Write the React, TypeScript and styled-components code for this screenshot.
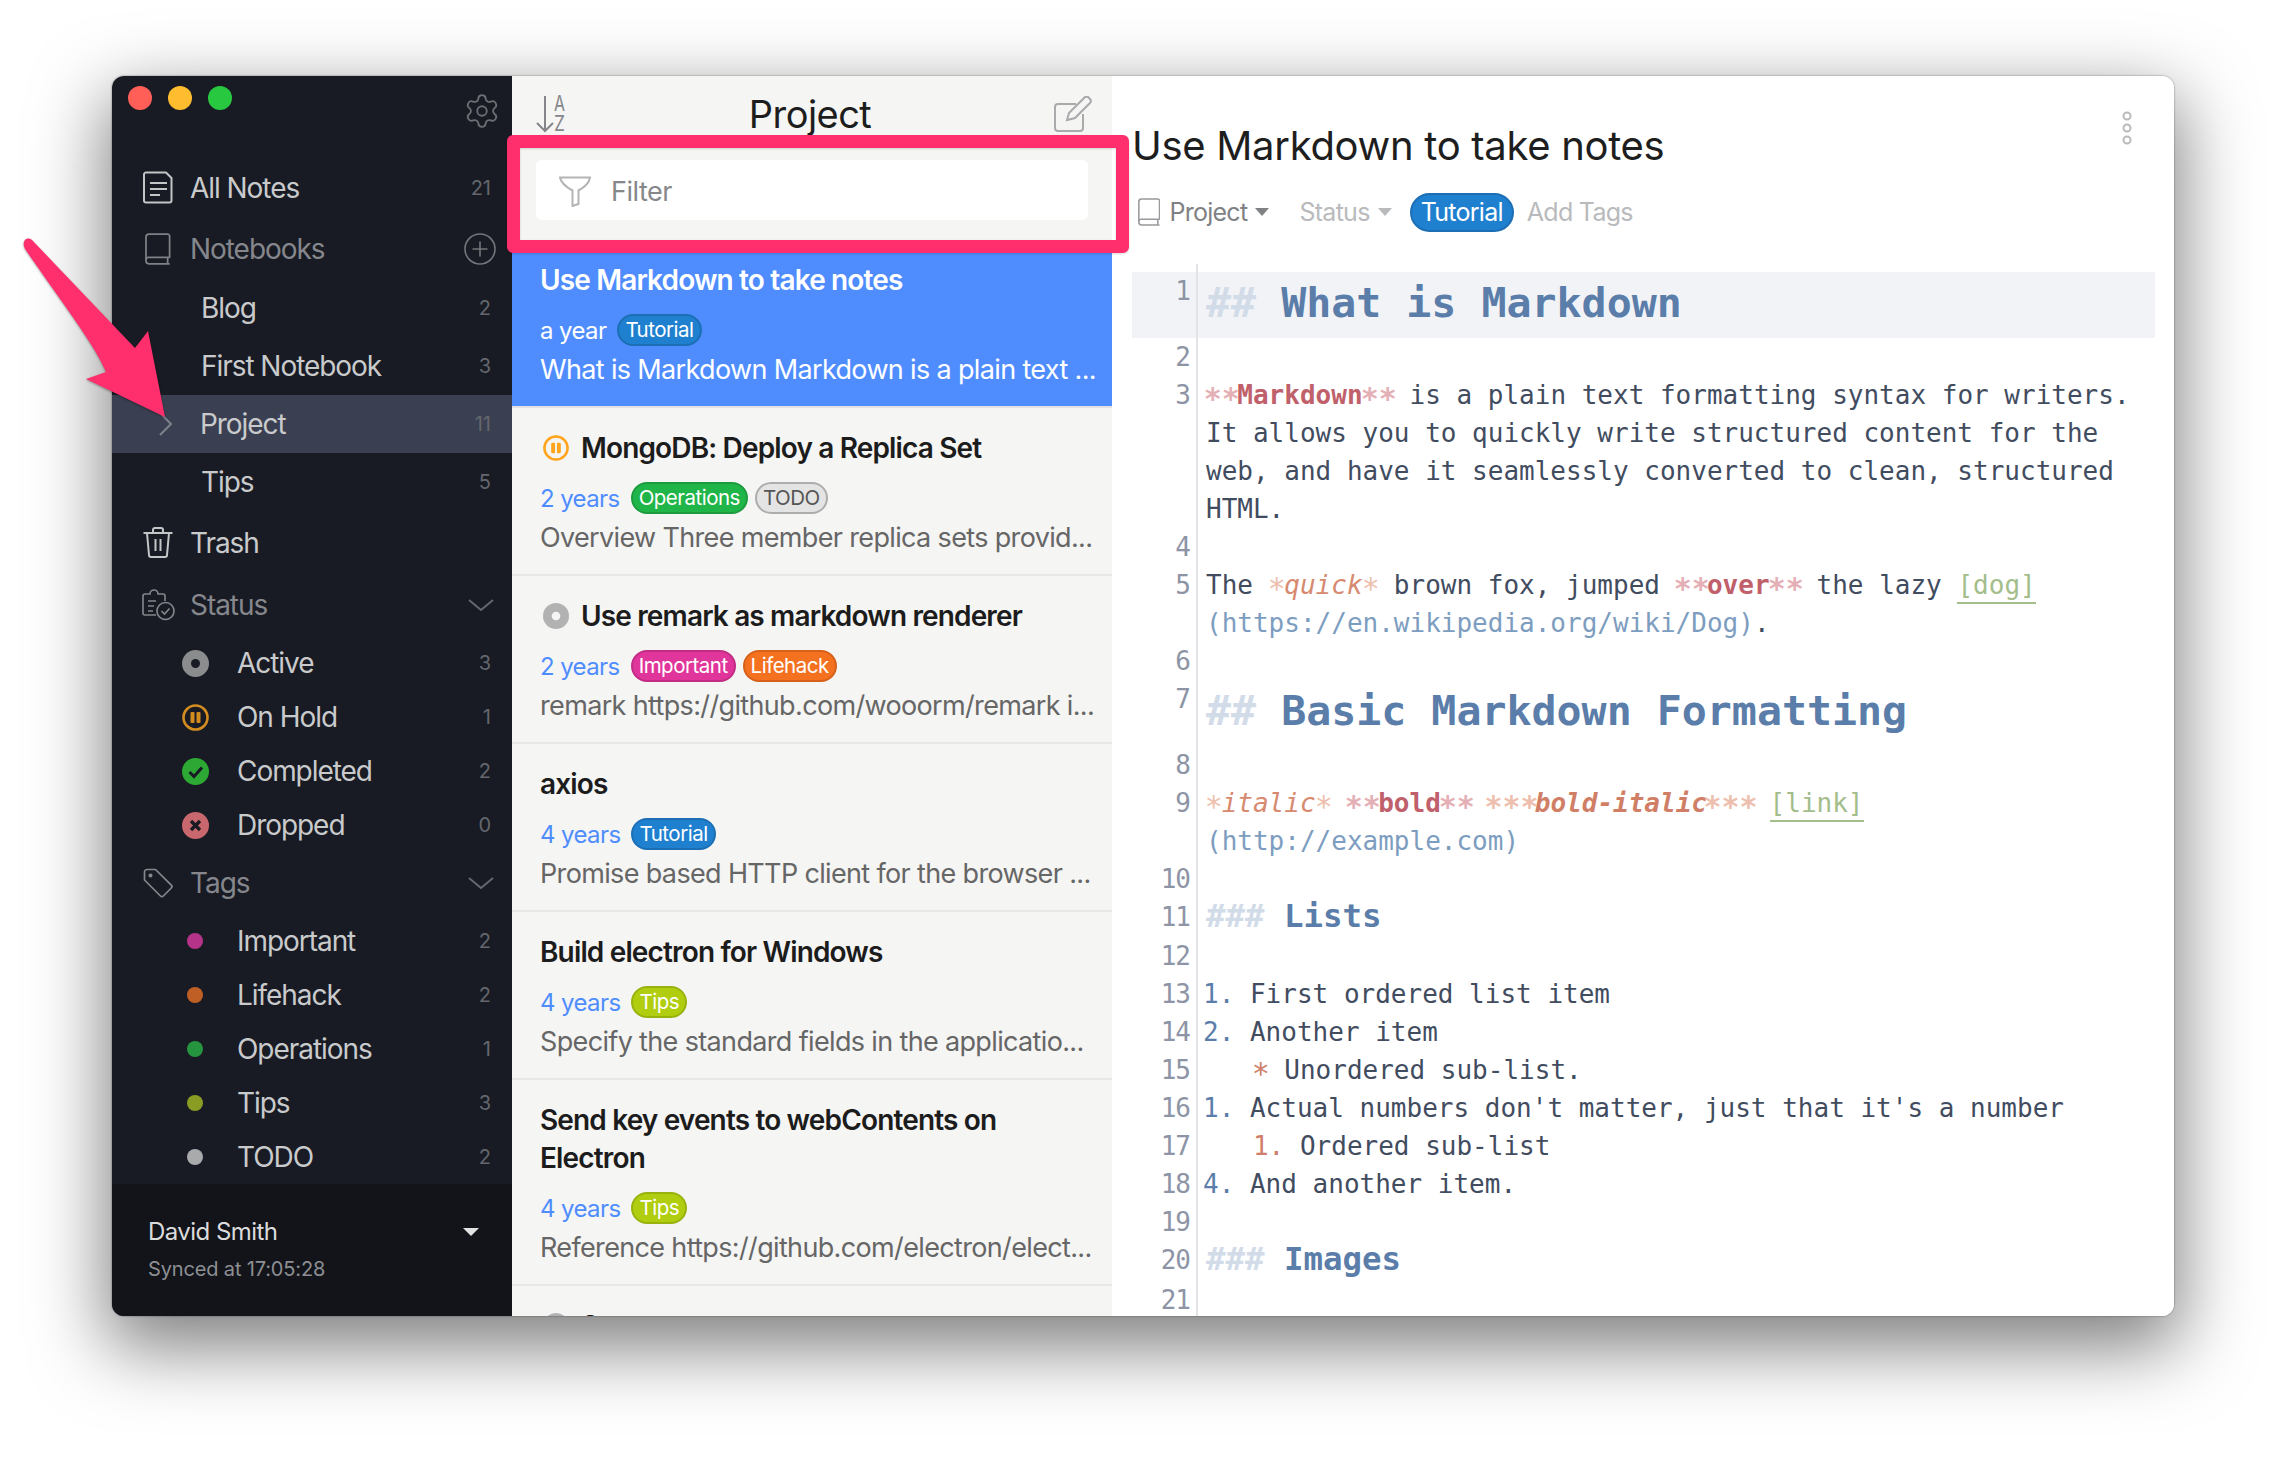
import React from 'react'
import styled, { createGlobalStyle } from 'styled-components'
import { Settings } from 'lucide-react'

const Global = createGlobalStyle`
    html, body {
        margin: 0;
        padding: 0;
        background: #ffffff;
    }
    * {
        box-sizing: border-box;
    }
`

const SANS = `Inter, 'Noto Sans', sans-serif`
const MONO = `'DejaVu Sans Mono', 'Liberation Mono', monospace`

const Page = styled.div`
    position: relative;
    width: 2286px;
    height: 1464px;
    padding: 76px 112px 0 112px;
    overflow: hidden;
    font-family: ${SANS};
`

const Window = styled.div`
    display: flex;
    width: 2062px;
    height: 1240px;
    border-radius: 12px;
    overflow: hidden;
    background: #fff;
    box-shadow: 0 26px 72px 6px rgba(0, 0, 0, 0.5), 0 0 2px rgba(0, 0, 0, 0.5);
`

/* annotation on top of the screenshot */
const PinkBox = styled.div`
    position: absolute;
    left: 507px;
    top: 135px;
    width: 622px;
    height: 118px;
    border: 13px solid #ff2e6c;
    border-radius: 6px;
    filter: drop-shadow(0 1px 1px rgba(0, 0, 0, 0.15));
`

const Arrow = styled.svg`
    position: absolute;
    left: 0;
    top: 200px;
    filter: drop-shadow(0 1px 1px rgba(0, 0, 0, 0.35));
`

/* sidebar */
const Sidebar = styled.aside`
    display: flex;
    flex-direction: column;
    flex: 0 0 400px;
    height: 100%;
    background: #181b23;
    color: #c9cacc;
`

const TitleBar = styled.div`
    display: flex;
    justify-content: space-between;
    height: 82px;
    padding: 10px 11px 0 16px;
`

const Gear = styled(Settings)`
    margin-top: 6px;
`

const Lights = styled.div`
    display: flex;
    gap: 16px;
`

const Light = styled.span<{ $c: string }>`
    width: 24px;
    height: 24px;
    border-radius: 50%;
    background: ${(p) => p.$c};
`

const Row = styled.div<{ $h: number; $pad: number; $active?: boolean; $dim?: boolean }>`
    position: relative;
    display: flex;
    align-items: center;
    flex: none;
    height: ${(p) => p.$h}px;
    padding: 0 21px 0 ${(p) => p.$pad}px;
    background: ${(p) => (p.$active ? '#3a3f51' : 'transparent')};
    color: ${(p) => (p.$dim ? '#85878c' : '#c9cacc')};
    font-size: 28px;
    letter-spacing: -1.05px;
`

const RowIcon = styled.span`
    display: flex;
    justify-content: center;
    flex: 0 0 30px;
    min-width: 0;
    margin-right: 17px;
`

const SubIcon = styled.span`
    display: flex;
    justify-content: center;
    flex: 0 0 28px;
    margin-right: 28px;
`

const Label = styled.span`
    flex: 1;
`

const Count = styled.span`
    color: #64676e;
    font-size: 20px;
    letter-spacing: 0;
`

const Chevron = styled.svg`
    margin-right: -3px;
`

const Caret = styled.svg`
    position: absolute;
    left: 47px;
`

const Dot = styled.span<{ $c: string }>`
    width: 16px;
    height: 16px;
    border-radius: 50%;
    background: ${(p) => p.$c};
`

const Footer = styled.div`
    position: relative;
    margin-top: auto;
    height: 133px;
    padding: 30px 0 0 36px;
    background: #12141a;
`

const UserName = styled.div`
    color: #dcdcdd;
    font-size: 24px;
    line-height: 36px;
    letter-spacing: -0.55px;
`

const SyncText = styled.div`
    margin-top: 3px;
    color: #8d8f93;
    font-size: 20px;
    line-height: 32px;
    letter-spacing: -0.15px;
`

const FooterCaret = styled.span`
    position: absolute;
    right: 33px;
    top: 44px;
    border-left: 8px solid transparent;
    border-right: 8px solid transparent;
    border-top: 8px solid #e2e2e3;
`

/* note list */
const ListPane = styled.section`
    flex: 0 0 600px;
    height: 100%;
    overflow: hidden;
    background: #f5f5f4;
`

const ListHeader = styled.div`
    display: flex;
    align-items: center;
    justify-content: space-between;
    height: 72px;
    padding: 4px 20px 0 24px;
`

const ListTitle = styled.h2`
    margin: 0;
    color: #1d1d1d;
    font-size: 38px;
    font-weight: 400;
    letter-spacing: -0.55px;
`

const FilterWrap = styled.div`
    height: 92px;
    padding: 12px 24px 0 24px;
`

const FilterBox = styled.div`
    display: flex;
    align-items: center;
    height: 60px;
    padding: 3px 0 0 23px;
    border-radius: 6px;
    background: #fff;
    color: #86878a;
    font-size: 27px;
    letter-spacing: -0.5px;
`

const FilterLabel = styled.span`
    margin-left: 20px;
`

const Note = styled.article<{ $selected?: boolean }>`
    padding: 21px 12px 17px 28px;
    background: ${(p) => (p.$selected ? '#4f8dff' : 'transparent')};
    border-bottom: 2px solid ${(p) => (p.$selected ? '#e3e3e3' : '#e8e8e8')};
`

const NoteTitle = styled.div<{ $selected?: boolean }>`
    display: flex;
    align-items: center;
    gap: 12px;
    color: ${(p) => (p.$selected ? '#fff' : '#1c1c1c')};
    font-size: 28px;
    font-weight: 600;
    line-height: 38px;
    letter-spacing: -0.85px;

    svg {
        margin-left: 3px;
    }
`

const Meta = styled.div`
    display: flex;
    align-items: center;
    gap: 7px;
    height: 36px;
    margin-top: 13px;
`

const Age = styled.span<{ $selected?: boolean }>`
    margin-right: 4px;
    color: ${(p) => (p.$selected ? '#fff' : '#4f8dff')};
    font-size: 24px;
    letter-spacing: -0.6px;
`

const Pill = styled.span<{ $bg: string; $line: string; $fg: string }>`
    height: 32px;
    padding: 0 6px;
    border: 2px solid ${(p) => p.$line};
    border-radius: 16px;
    background: ${(p) => p.$bg};
    color: ${(p) => p.$fg};
    font-size: 20.5px;
    line-height: 27px;
    letter-spacing: -0.5px;
`

const Desc = styled.div<{ $selected?: boolean }>`
    margin-top: 3px;
    overflow: hidden;
    white-space: nowrap;
    color: ${(p) => (p.$selected ? '#fff' : '#666666')};
    font-size: 27px;
    line-height: 38px;
    letter-spacing: -0.65px;
`

/* editor */
const EditorPane = styled.main`
    position: relative;
    flex: 1;
    height: 100%;
    overflow: hidden;
    padding: 0 19px 0 20px;
    background: #fff;
`

const EditorTitle = styled.h1`
    margin: 0;
    padding: 46px 0 0 0;
    color: #1e1e1e;
    font-size: 40px;
    font-weight: 400;
    line-height: 48px;
    letter-spacing: -0.3px;
`

const MoreDots = styled.svg`
    position: absolute;
    top: 34px;
    right: 41px;
`

const TagBar = styled.div`
    display: flex;
    align-items: center;
    height: 40px;
    margin-top: 22px;
    padding-left: 6px;
    font-size: 25px;
    letter-spacing: -0.72px;
`

const TagBarItem = styled.span<{ $faint?: boolean; $gap: number }>`
    display: flex;
    align-items: center;
    margin-right: ${(p) => p.$gap}px;
    color: ${(p) => (p.$faint ? '#b9babc' : '#808184')};
`

const MiniCaret = styled.span<{ $faint?: boolean }>`
    margin-left: 8px;
    border-left: 7px solid transparent;
    border-right: 7px solid transparent;
    border-top: 8px solid ${(p) => (p.$faint ? '#b9babc' : '#808184')};
`

const BookLabel = styled.span`
    margin-left: 9px;
`

const TutorialTag = styled.span`
    height: 39px;
    padding: 0 9px;
    margin-right: 13px;
    border: 2px solid #1c6fb5;
    border-radius: 20px;
    background: #1f80d0;
    color: #fff;
    line-height: 34px;
`

const Code = styled.div`
    position: relative;
    margin-top: 32px;
    padding-top: 8px;
    font-family: ${MONO};
    font-size: 26px;

    &::before {
        content: '';
        position: absolute;
        left: 64px;
        top: 0;
        bottom: 0;
        width: 2px;
        background: #e2e3e6;
    }
`

const CodeLine = styled.div<{ $h?: number; $active?: boolean }>`
    display: flex;
    min-height: ${(p) => p.$h || 38}px;
    background: ${(p) => (p.$active ? '#f2f3f7' : 'transparent')};
`

const LineNo = styled.div`
    flex: 0 0 58px;
    color: #8d94a5;
    text-align: right;
    line-height: 38px;
    letter-spacing: -1px;
`

const LineText = styled.div<{ $size?: number; $lh?: number; $list?: boolean }>`
    flex: 1;
    margin-left: ${(p) => (p.$list ? 13 : 16)}px;
    color: #424c5f;
    white-space: pre-wrap;
    font-size: ${(p) => p.$size || 26}px;
    line-height: ${(p) => p.$lh || 38}px;
`

const Heading = styled.span`
    color: #5b7da9;
    font-weight: 700;
`

const HashMark = styled.span`
    color: #d2dbe8;
    font-weight: 700;
`

/* the asterisks sit lower and larger in the reference font */
const Mark = styled.span<{ $c: string; $bold?: boolean }>`
    display: inline-block;
    color: ${(p) => p.$c};
    font-weight: ${(p) => (p.$bold ? 700 : 400)};
    transform: translateY(4px) scale(1.15);
`

const Strong = styled.span`
    color: #c0606a;
    font-weight: 700;
`

const Emph = styled.span`
    color: #d78a70;
    font-style: italic;
`

const StrongEmph = styled.span`
    color: #d07f66;
    font-style: italic;
    font-weight: 700;
`

const LinkText = styled.span`
    color: #a3bd8b;
    border-bottom: 2px solid #a3bd8b;
    padding-bottom: 2px;
`

const Url = styled.span`
    color: #7d9dc0;
    white-space: nowrap;
`

const ListNum = styled.span`
    color: #5b7da9;
`

const NestNum = styled.span`
    color: #cf7f6c;
`

/* icons */
const NoteIcon = () => (
    <svg width="30" height="33" viewBox="0 0 30 33" fill="none" stroke="#c4c5c7" strokeWidth="2">
        <path d="M3 1.500h20l5.500 5.500v22.500a2 2 0 0 1-2 2H3a2 2 0 0 1-2-2v-26a2 2 0 0 1 2-2z" />
        <path d="M7 12h17M7 18h17M7 24h10" />
    </svg>
)

const BookIcon = ({ size = 32, c = '#7f8186' }: { size?: number; c?: string }) => (
    <svg width={size * 0.8} height={size} viewBox="0 0 26 32" fill="none" stroke={c} strokeWidth="1.8">
        <path d="M25 25V3a2 2 0 0 0-2-2H4a3 3 0 0 0-3 3v24a3 3 0 0 0 3 3h21" />
        <path d="M1 27a2.500 2.500 0 0 1 3-2.500h21M23 25v6" />
    </svg>
)

const TrashIcon = () => (
    <svg width="30" height="31" viewBox="0 0 30 31" fill="none" stroke="#c4c5c7" strokeWidth="2">
        <path d="M0.500 6h29M4 6l2 22a2 2 0 0 0 2 2h14a2 2 0 0 0 2-2l2-22" />
        <path d="M10 5V3a2 2 0 0 1 2-2h6a2 2 0 0 1 2 2v2M12.500 12v12M17.500 12v12" />
    </svg>
)

const ClipboardIcon = () => (
    <svg width="33" height="32" viewBox="0 0 33 32" fill="none" stroke="#85878c" strokeWidth="1.600" style={{ flexShrink: 0 }}>
        <path d="M14 26H3a2 2 0 0 1-2-2V7a2 2 0 0 1 2-2h5a4 4 0 0 1 8 0h5a2 2 0 0 1 2 2v5" />
        <path d="M6 12h8M6 17h6M6 22h5" />
        <circle cx="23.500" cy="22" r="8.500" />
        <path d="M19.500 22l3 3 5-5.500" />
    </svg>
)

const TagIcon = () => (
    <svg width="31" height="31" viewBox="0 0 31 31" fill="none" stroke="#85878c" strokeWidth="1.700" style={{ flexShrink: 0 }}>
        <path d="M1.500 4v8l16 16a2 2 0 0 0 2.800 0l8-8a2 2 0 0 0 0-2.800L12.500 1.500h-8.500a2.500 2.500 0 0 0-2.500 2.500z" />
        <circle cx="7.500" cy="7.500" r="1.200" fill="#85878c" />
    </svg>
)

const PlusCircle = () => (
    <svg width="32" height="32" viewBox="0 0 32 32" fill="none" stroke="#74767b" strokeWidth="1.600" style={{ marginRight: -5 }}>
        <circle cx="16" cy="16" r="15" />
        <path d="M16 8.500v15M8.500 16h15" />
    </svg>
)

const Down = () => (
    <Chevron width="26" height="12" viewBox="0 0 26 12" fill="none" stroke="#64676e" strokeWidth="2">
        <path d="M1 1l12 10L25 1" />
    </Chevron>
)

type StatusKind = 'active' | 'hold' | 'done' | 'dropped'

const StatusIcon = ({ kind, size = 27, c, ink = '#181b23' }: { kind: StatusKind; size?: number; c: string; ink?: string }) => (
    <svg width={size} height={size} viewBox="0 0 27 27">
        {kind === 'hold' ? (
            <>
                <circle cx="13.500" cy="13.500" r="12" fill="none" stroke={c} strokeWidth="2.600" />
                <rect x="8.500" y="8" width="4" height="11" rx="1" fill={c} />
                <rect x="14.500" y="8" width="4" height="11" rx="1" fill={c} />
            </>
        ) : (
            <circle cx="13.500" cy="13.500" r="13.500" fill={c} />
        )}
        {kind === 'active' && <circle cx="13.500" cy="13.500" r="4.500" fill={ink} />}
        {kind === 'done' && <path d="M7.500 14l4.500 4.500 8-9" fill="none" stroke={ink} strokeWidth="3" />}
        {kind === 'dropped' && <path d="M9 9l9 9M18 9l-9 9" fill="none" stroke={ink} strokeWidth="3.400" />}
    </svg>
)

const SortIcon = () => (
    <svg width="30" height="38" viewBox="0 0 30 38" fill="none" stroke="#85868a" strokeWidth="2">
        <path d="M9 1v35M1 28l8 8 8-8" />
        <text x="18" y="16" fontSize="21" fontFamily={SANS} fill="#85868a" stroke="none" textLength="11" lengthAdjust="spacingAndGlyphs">A</text>
        <text x="18" y="36" fontSize="21" fontFamily={SANS} fill="#85868a" stroke="none" textLength="11" lengthAdjust="spacingAndGlyphs">Z</text>
    </svg>
)

const EditIcon = () => (
    <svg width="38" height="36" viewBox="0 0 38 36" fill="none" stroke="#a9aaac" strokeWidth="2">
        <path d="M22 8H4a3 3 0 0 0-3 3v21a3 3 0 0 0 3 3h22a3 3 0 0 0 3-3V18" />
        <path d="M13 24l2-7L30 2a3 3 0 0 1 5 0l1 1a3 3 0 0 1 0 4L21 22z" />
    </svg>
)

const FilterIcon = () => (
    <svg width="32" height="31" viewBox="0 0 32 31" fill="none" stroke="#b3b4b6" strokeWidth="2">
        <path d="M1 1.500h30c-1 6-6 10-11.500 13V28l-6 2V14.500C8 11.500 2 7.500 1 1.500z" />
    </svg>
)

/* data */
const statuses: { name: string; kind: StatusKind; c: string; n: number }[] = [
    { name: 'Active', kind: 'active', c: '#8b8c8e', n: 3 },
    { name: 'On Hold', kind: 'hold', c: '#d38c20', n: 1 },
    { name: 'Completed', kind: 'done', c: '#2da835', n: 2 },
    { name: 'Dropped', kind: 'dropped', c: '#c8686e', n: 0 },
]

const tags = [
    { name: 'Important', c: '#b5348a', n: 2 },
    { name: 'Lifehack', c: '#bf5f25', n: 2 },
    { name: 'Operations', c: '#26953f', n: 1 },
    { name: 'Tips', c: '#8b9c25', n: 3 },
    { name: 'TODO', c: '#a9aaac', n: 2 },
]

const PILLS: Record<string, [string, string, string]> = {
    Tutorial: ['#1f80d0', '#1c6fb5', '#fff'],
    Operations: ['#20b548', '#1c9c3e', '#fff'],
    TODO: ['#e4e4e4', '#adadad', '#555'],
    Important: ['#e0359a', '#c22c85', '#fff'],
    Lifehack: ['#f4711f', '#d6611a', '#fff'],
    Tips: ['#b1cd10', '#9ab20e', '#fff'],
}

type NoteData = { title: string; age: string; tags: string[]; desc: string; status?: StatusKind; selected?: boolean }

const notes: NoteData[] = [
    { title: 'Use Markdown to take notes', age: 'a year', tags: ['Tutorial'], desc: 'What is Markdown Markdown is a plain text ...', selected: true },
    { title: 'MongoDB: Deploy a Replica Set', age: '2 years', tags: ['Operations', 'TODO'], desc: 'Overview Three member replica sets provid...', status: 'hold' },
    { title: 'Use remark as markdown renderer', age: '2 years', tags: ['Important', 'Lifehack'], desc: 'remark https://github.com/wooorm/remark i...', status: 'active' },
    { title: 'axios', age: '4 years', tags: ['Tutorial'], desc: 'Promise based HTTP client for the browser ...' },
    { title: 'Build electron for Windows', age: '4 years', tags: ['Tips'], desc: 'Specify the standard fields in the applicatio...' },
    { title: 'Send key events to webContents on Electron', age: '4 years', tags: ['Tips'], desc: 'Reference https://github.com/electron/elect...' },
    { title: 'Setup a remote server', age: '4 years', tags: ['Tips'], desc: '', status: 'active' },
]

const NoteItem = ({ note }: { note: NoteData }) => (
    <Note $selected={note.selected}>
        <NoteTitle $selected={note.selected}>
            {note.status && <StatusIcon kind={note.status} size={26} c={note.status === 'hold' ? '#ffa41b' : '#b2b2b2'} ink="#f5f5f4" />}
            <span>{note.title}</span>
        </NoteTitle>
        <Meta>
            <Age $selected={note.selected}>{note.age}</Age>
            {note.tags.map((t) => (
                <Pill key={t} $bg={PILLS[t][0]} $line={PILLS[t][1]} $fg={PILLS[t][2]}>{t}</Pill>
            ))}
        </Meta>
        <Desc $selected={note.selected}>{note.desc}</Desc>
    </Note>
)

const SM = '#e5b0b5'
const EM = '#eebfae'

export default function App() {
    return (
        <Page>
            <Global />
            <Window>
                <Sidebar>
                    <TitleBar>
                        <Lights>
                            <Light $c="#ff5f57" />
                            <Light $c="#febc2e" />
                            <Light $c="#28c840" />
                        </Lights>
                        <Gear size={38} strokeWidth={1.15} color="#6c6e73" />
                    </TitleBar>
                    <Row $h={61} $pad={31}><RowIcon><NoteIcon /></RowIcon><Label>All Notes</Label><Count>21</Count></Row>
                    <Row $h={61} $pad={31} $dim><RowIcon><BookIcon /></RowIcon><Label>Notebooks</Label><PlusCircle /></Row>
                    <Row $h={58} $pad={89}><Label>Blog</Label><Count>2</Count></Row>
                    <Row $h={58} $pad={89}><Label>First Notebook</Label><Count>3</Count></Row>
                    <Row $h={58} $pad={88} $active>
                        <Caret width="14" height="24" viewBox="0 0 14 24" fill="none" stroke="#7f828d" strokeWidth="2"><path d="M1 1l11 11L1 23" /></Caret>
                        <Label>Project</Label><Count>11</Count>
                    </Row>
                    <Row $h={58} $pad={89}><Label>Tips</Label><Count>5</Count></Row>
                    <Row $h={63} $pad={31}><RowIcon><TrashIcon /></RowIcon><Label>Trash</Label></Row>
                    <Row $h={62} $pad={31} $dim><RowIcon><ClipboardIcon /></RowIcon><Label>Status</Label><Down /></Row>
                    {statuses.map((s) => (
                        <Row key={s.name} $h={54} $pad={69}>
                            <SubIcon><StatusIcon kind={s.kind} c={s.c} /></SubIcon>
                            <Label>{s.name}</Label><Count>{s.n}</Count>
                        </Row>
                    ))}
                    <Row $h={62} $pad={31} $dim><RowIcon><TagIcon /></RowIcon><Label>Tags</Label><Down /></Row>
                    {tags.map((t) => (
                        <Row key={t.name} $h={54} $pad={69}>
                            <SubIcon><Dot $c={t.c} /></SubIcon>
                            <Label>{t.name}</Label><Count>{t.n}</Count>
                        </Row>
                    ))}
                    <Footer>
                        <UserName>David Smith</UserName>
                        <SyncText>Synced at 17:05:28</SyncText>
                        <FooterCaret />
                    </Footer>
                </Sidebar>

                <ListPane>
                    <ListHeader>
                        <SortIcon />
                        <ListTitle>Project</ListTitle>
                        <EditIcon />
                    </ListHeader>
                    <FilterWrap>
                        <FilterBox>
                            <FilterIcon />
                            <FilterLabel>Filter</FilterLabel>
                        </FilterBox>
                    </FilterWrap>
                    {notes.map((n) => (
                        <NoteItem key={n.title} note={n} />
                    ))}
                </ListPane>

                <EditorPane>
                    <EditorTitle>Use Markdown to take notes</EditorTitle>
                    <MoreDots width="12" height="36" viewBox="0 0 12 36" fill="none" stroke="#b9babc" strokeWidth="2">
                        <circle cx="6" cy="6" r="3.500" />
                        <circle cx="6" cy="18" r="3.500" />
                        <circle cx="6" cy="30" r="3.500" />
                    </MoreDots>
                    <TagBar>
                        <TagBarItem $gap={30}>
                            <BookIcon size={28} c="#98999c" />
                            <BookLabel>Project</BookLabel>
                            <MiniCaret />
                        </TagBarItem>
                        <TagBarItem $gap={18} $faint>
                            Status
                            <MiniCaret $faint />
                        </TagBarItem>
                        <TutorialTag>Tutorial</TutorialTag>
                        <TagBarItem $gap={0} $faint>Add Tags</TagBarItem>
                    </TagBar>
                    <Code>
                        <CodeLine $h={66} $active>
                            <LineNo>1</LineNo>
                            <LineText $size={41.6} $lh={62}><HashMark>## </HashMark><Heading>What is Markdown</Heading></LineText>
                        </CodeLine>
                        <CodeLine><LineNo>2</LineNo><LineText /></CodeLine>
                        <CodeLine>
                            <LineNo>3</LineNo>
                            <LineText><Mark $c={SM} $bold>**</Mark><Strong>Markdown</Strong><Mark $c={SM} $bold>**</Mark> is a plain text formatting syntax for writers. It allows you to quickly write structured content for the web, and have it seamlessly converted to clean, structured HTML.</LineText>
                        </CodeLine>
                        <CodeLine><LineNo>4</LineNo><LineText /></CodeLine>
                        <CodeLine>
                            <LineNo>5</LineNo>
                            <LineText>The <Mark $c={EM}>*</Mark><Emph>quick</Emph><Mark $c={EM}>*</Mark> brown fox, jumped <Mark $c={SM} $bold>**</Mark><Strong>over</Strong><Mark $c={SM} $bold>**</Mark> the lazy <LinkText>[dog]</LinkText> <Url>(https://en.wikipedia.org/wiki/Dog)</Url>.</LineText>
                        </CodeLine>
                        <CodeLine><LineNo>6</LineNo><LineText /></CodeLine>
                        <CodeLine $h={66}>
                            <LineNo>7</LineNo>
                            <LineText $size={41.6} $lh={62}><HashMark>## </HashMark><Heading>Basic Markdown Formatting</Heading></LineText>
                        </CodeLine>
                        <CodeLine><LineNo>8</LineNo><LineText /></CodeLine>
                        <CodeLine>
                            <LineNo>9</LineNo>
                            <LineText><Mark $c={EM}>*</Mark><Emph>italic</Emph><Mark $c={EM}>*</Mark> <Mark $c={SM} $bold>**</Mark><Strong>bold</Strong><Mark $c={SM} $bold>**</Mark> <Mark $c={EM} $bold>***</Mark><StrongEmph>bold-italic</StrongEmph><Mark $c={EM} $bold>***</Mark> <LinkText>[link]</LinkText> <Url>(http://example.com)</Url></LineText>
                        </CodeLine>
                        <CodeLine><LineNo>10</LineNo><LineText /></CodeLine>
                        <CodeLine $h={39}>
                            <LineNo>11</LineNo>
                            <LineText $size={32.4} $lh={36}><HashMark>### </HashMark><Heading>Lists</Heading></LineText>
                        </CodeLine>
                        <CodeLine><LineNo>12</LineNo><LineText /></CodeLine>
                        <CodeLine><LineNo>13</LineNo><LineText $list><ListNum>1.</ListNum> First ordered list item</LineText></CodeLine>
                        <CodeLine><LineNo>14</LineNo><LineText $list><ListNum>2.</ListNum> Another item</LineText></CodeLine>
                        <CodeLine><LineNo>15</LineNo><LineText>{'   '}<Mark $c="#cf7f6c">*</Mark> Unordered sub-list.</LineText></CodeLine>
                        <CodeLine><LineNo>16</LineNo><LineText $list><ListNum>1.</ListNum> Actual numbers don't matter, just that it's a number</LineText></CodeLine>
                        <CodeLine><LineNo>17</LineNo><LineText>{'   '}<NestNum>1.</NestNum> Ordered sub-list</LineText></CodeLine>
                        <CodeLine><LineNo>18</LineNo><LineText $list><ListNum>4.</ListNum> And another item.</LineText></CodeLine>
                        <CodeLine><LineNo>19</LineNo><LineText /></CodeLine>
                        <CodeLine $h={40}>
                            <LineNo>20</LineNo>
                            <LineText $size={32.4} $lh={36}><HashMark>### </HashMark><Heading>Images</Heading></LineText>
                        </CodeLine>
                        <CodeLine><LineNo>21</LineNo><LineText /></CodeLine>
                    </Code>
                </EditorPane>
            </Window>
            <PinkBox />
            <Arrow width="180" height="230" viewBox="0 200 180 230">
                <path d="M32 240L135 348L148 331L165 417L86 379L106 372C95 345 60 300 25 249C21 241 27 236 32 240Z" fill="#ff2e6c" />
            </Arrow>
        </Page>
    )
}
